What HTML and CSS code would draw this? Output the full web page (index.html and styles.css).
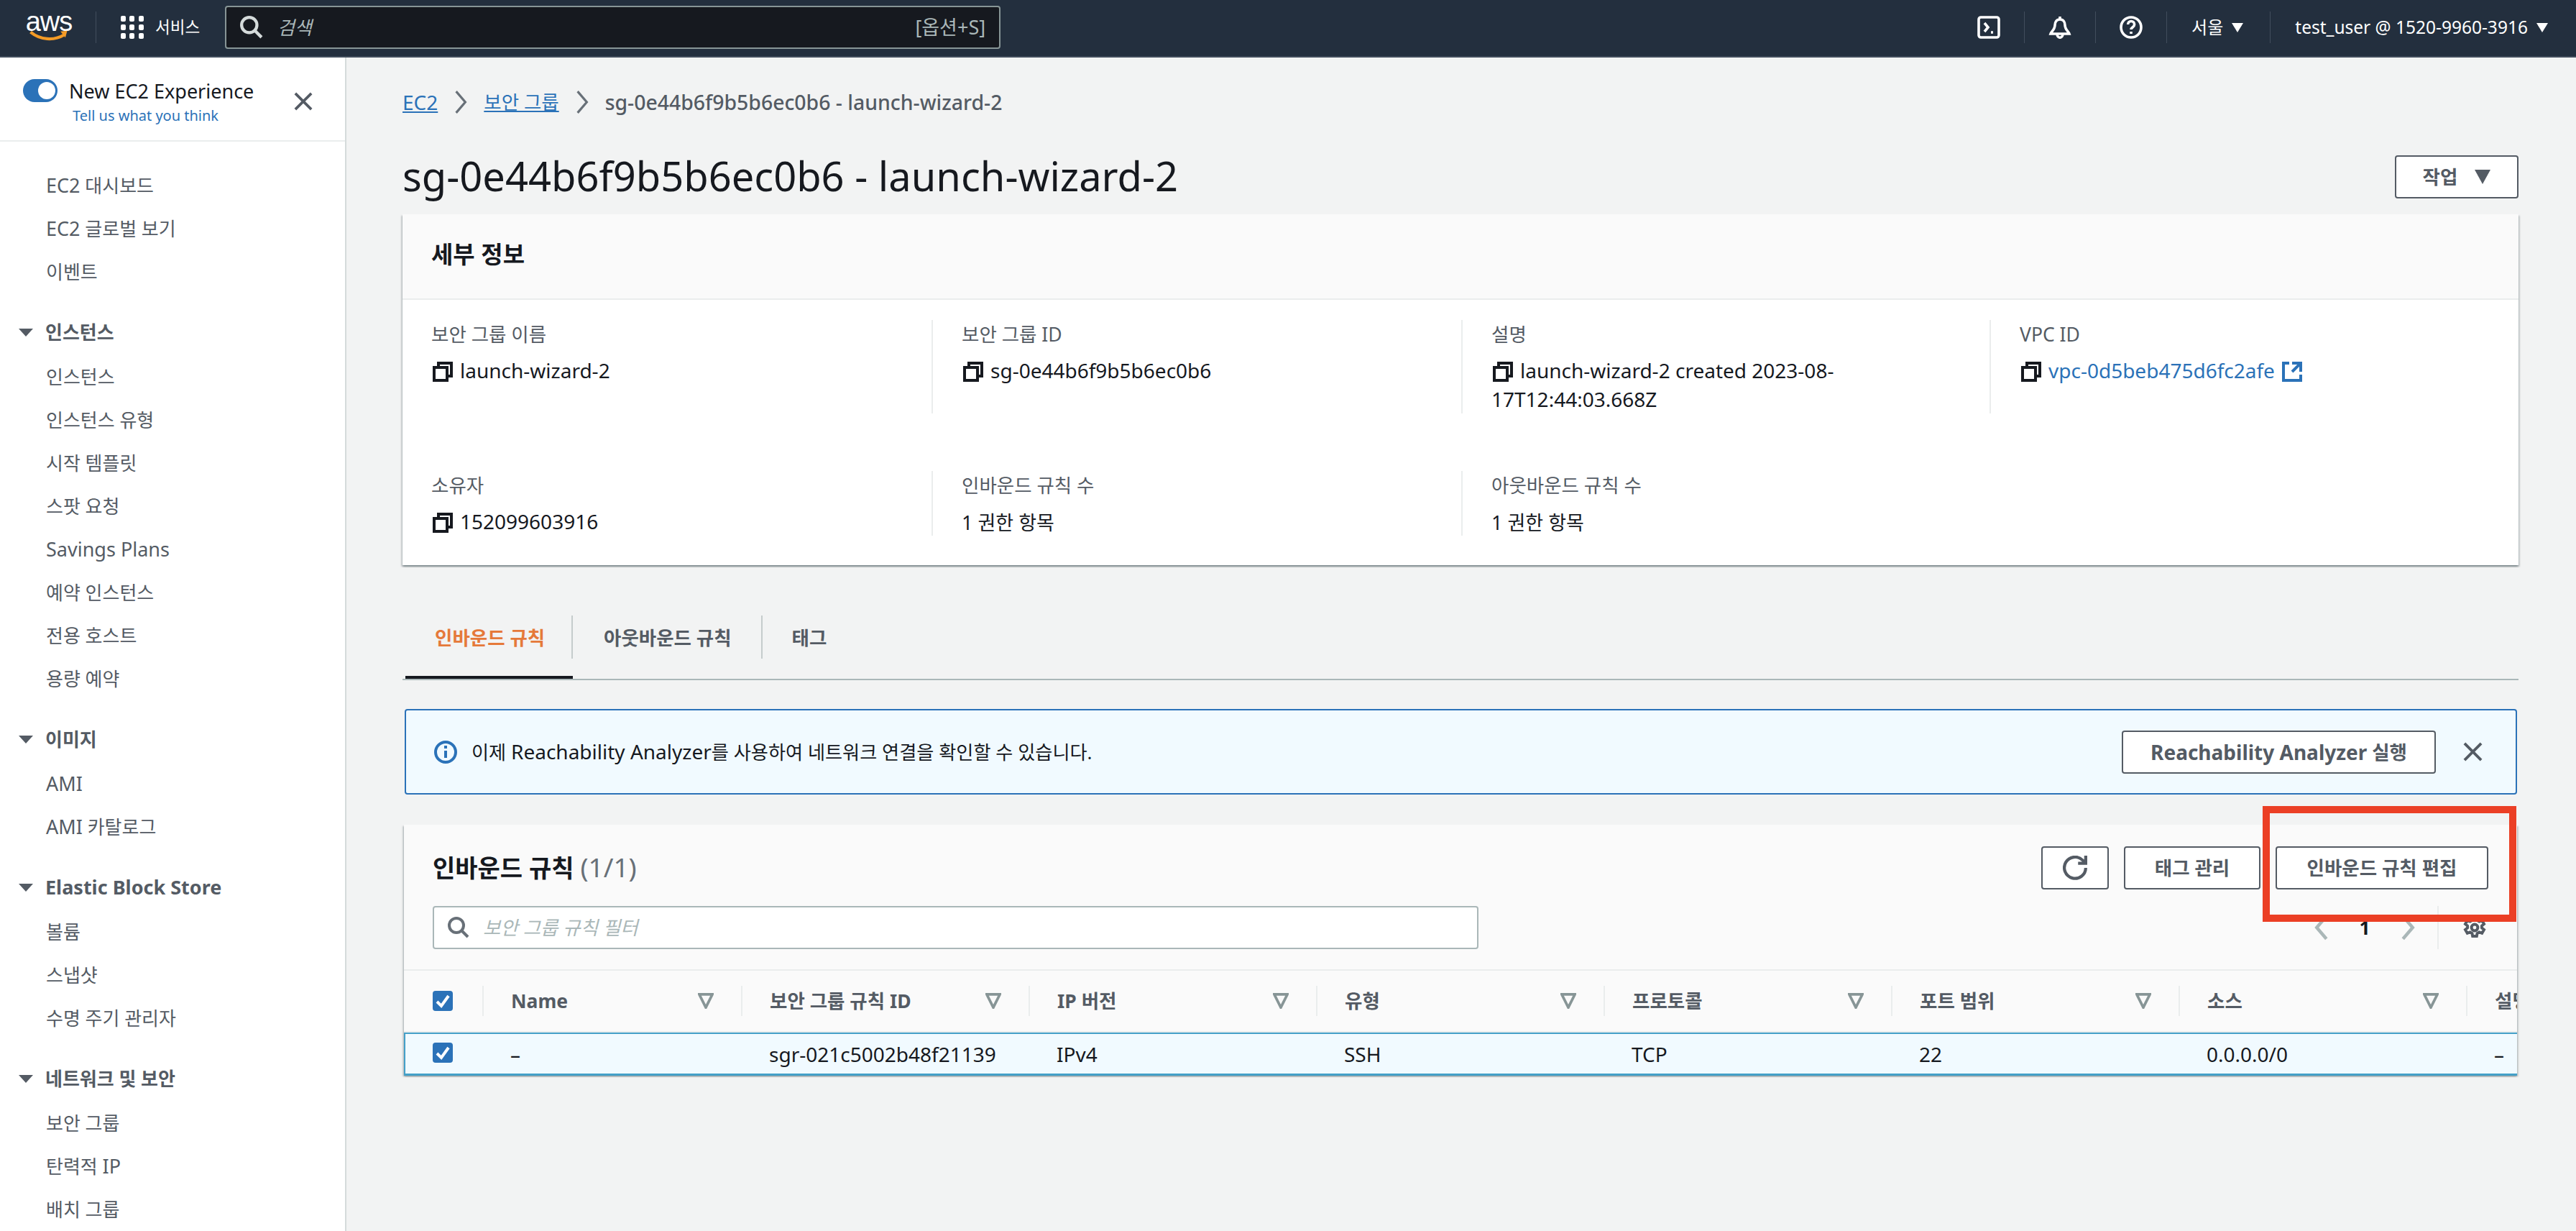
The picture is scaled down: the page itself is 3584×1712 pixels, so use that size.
FILE: index.html
```html
<!DOCTYPE html>
<html lang="ko">
<head>
    <meta charset="UTF-8">
    <meta name="viewport" content="width=device-width, initial-scale=1.0">
    <title>EC2 보안 그룹</title>
    <link rel="stylesheet" href="styles.css">
</head>
<body>
    <svg class="icon-defs" width="0" height="0">
        <symbol id="i-close" viewBox="1 1 14 14"><path d="M2 2l12 12M14 2L2 14"/></symbol>
        <symbol id="i-search" viewBox="1 1 15 15"><circle cx="7" cy="7" r="5"/><path d="M15 15l-4.500-4.500"/></symbol>
        <symbol id="i-copy" viewBox="1 1 14 14"><path d="M2 5h9v9H2z"/><path d="M5 5V2h9v9h-3"/></symbol>
        <symbol id="i-filter" viewBox="2 2 12 12"><path d="M3 3h10L8 13z"/></symbol>
        <symbol id="i-check" viewBox="0 0 14 14"><path d="M3 7.500l3 3 5-7"/></symbol>
    </svg>

    <header class="topbar">
        <a class="aws-logo"><span class="aws-word">aws</span>
            <svg class="aws-smile" viewBox="0 0 62 20"><path d="M1 3c16 13 38 15 56 4" fill="none" stroke="#f49b26" stroke-width="5"/><path d="M50 2l11-1-3 11z" fill="#f49b26"/></svg>
        </a>
        <span class="top-sep sep-logo"></span>
        <svg class="grid-icon" viewBox="0 0 32 32" fill="#fff">
            <rect x="0" y="0" width="7" height="8" rx="2"/><rect x="12" y="0" width="7" height="8" rx="2"/><rect x="25" y="0" width="7" height="8" rx="2"/>
            <rect x="0" y="12" width="7" height="8" rx="2"/><rect x="12" y="12" width="7" height="8" rx="2"/><rect x="25" y="12" width="7" height="8" rx="2"/>
            <rect x="0" y="24" width="7" height="8" rx="2"/><rect x="12" y="24" width="7" height="8" rx="2"/><rect x="25" y="24" width="7" height="8" rx="2"/>
        </svg>
        <span class="top-text services">서비스</span>
        <div class="top-search">
            <svg class="ic top-search-icon"><use href="#i-search"/></svg>
            <span class="top-search-hint">검색</span>
            <span class="top-search-key">[옵션+S]</span>
        </div>
        <svg class="ic top-ic top-first" viewBox="0 0 16 16"><rect x="1" y="1" width="14" height="14" rx="1.500"/><path d="M5 5l2.500 3L5 11M9.500 11.500h1.500"/></svg>
        <span class="top-sep"></span>
        <svg class="ic top-ic" viewBox="0 0 16 16"><path d="M8 2.500C5.500 2.500 4.500 4.500 4.500 6.500c0 3-2.500 4.500-3 6h13c-.5-1.500-3-3-3-6 0-2-1-4-3.500-4zM8 .5v2M6 12.500c0 3.500 4 3.500 4 0"/></svg>
        <span class="top-sep"></span>
        <svg class="ic top-ic" viewBox="0 0 16 16"><circle cx="8" cy="8" r="7"/><path d="M5.800 6c0-3 4.500-3 4.500 0 0 2-2.300 2-2.300 3.500M8 11v1.500"/></svg>
        <span class="top-sep"></span>
        <span class="top-text region">서울</span><span class="caret-white"></span>
        <span class="top-sep"></span>
        <span class="top-text account">test_user @ 1520-9960-3916</span><span class="caret-white"></span>
    </header>

    <div class="layout">
        <aside class="sidenav">
            <div class="side-top">
                <span class="toggle"><span class="toggle-knob"></span></span>
                <div class="side-top-text">
                    <div class="side-title">New EC2 Experience</div>
                    <a class="side-feedback">Tell us what you think</a>
                </div>
                <svg class="ic side-close"><use href="#i-close"/></svg>
            </div>
            <nav class="side-list">
                <a class="side-item"><span class="en">EC2</span> 대시보드</a>
                <a class="side-item"><span class="en">EC2</span> 글로벌 보기</a>
                <a class="side-item">이벤트</a>
                <div class="side-section"><span class="side-caret"></span>인스턴스</div>
                <a class="side-item">인스턴스</a>
                <a class="side-item">인스턴스 유형</a>
                <a class="side-item">시작 템플릿</a>
                <a class="side-item">스팟 요청</a>
                <a class="side-item"><span class="en">Savings Plans</span></a>
                <a class="side-item">예약 인스턴스</a>
                <a class="side-item">전용 호스트</a>
                <a class="side-item">용량 예약</a>
                <div class="side-section"><span class="side-caret"></span>이미지</div>
                <a class="side-item"><span class="en">AMI</span></a>
                <a class="side-item"><span class="en">AMI</span> 카탈로그</a>
                <div class="side-section"><span class="side-caret"></span><span class="en">Elastic Block Store</span></div>
                <a class="side-item">볼륨</a>
                <a class="side-item">스냅샷</a>
                <a class="side-item">수명 주기 관리자</a>
                <div class="side-section"><span class="side-caret"></span>네트워크 및 보안</div>
                <a class="side-item">보안 그룹</a>
                <a class="side-item">탄력적 <span class="en">IP</span></a>
                <a class="side-item">배치 그룹</a>
            </nav>
        </aside>

        <main class="content">
            <div class="crumbs">
                <a class="link en">EC2</a>
                <svg class="ic crumb-sep" viewBox="0 0 16 16"><path d="M5 1l6 7-6 7"/></svg>
                <a class="link">보안 그룹</a>
                <svg class="ic crumb-sep" viewBox="0 0 16 16"><path d="M5 1l6 7-6 7"/></svg>
                <span class="crumb-now">sg-0e44b6f9b5b6ec0b6 - launch-wizard-2</span>
            </div>

            <div class="page-head">
                <h1>sg-0e44b6f9b5b6ec0b6 - launch-wizard-2</h1>
                <button class="btn btn-actions">작업<span class="caret-dark"></span></button>
            </div>

            <section class="card">
                <div class="card-head">세부 정보</div>
                <div class="details">
                    <div class="cell">
                        <div class="cell-label">보안 그룹 이름</div>
                        <div class="cell-value"><svg class="ic copy"><use href="#i-copy"/></svg>launch-wizard-2</div>
                    </div>
                    <div class="cell">
                        <div class="cell-label">보안 그룹 ID</div>
                        <div class="cell-value"><svg class="ic copy"><use href="#i-copy"/></svg>sg-0e44b6f9b5b6ec0b6</div>
                    </div>
                    <div class="cell">
                        <div class="cell-label">설명</div>
                        <div class="cell-value"><svg class="ic copy"><use href="#i-copy"/></svg>launch-wizard-2 created 2023-08-<br>17T12:44:03.668Z</div>
                    </div>
                    <div class="cell">
                        <div class="cell-label">VPC ID</div>
                        <div class="cell-value"><svg class="ic copy"><use href="#i-copy"/></svg><a class="plain-link">vpc-0d5beb475d6fc2afe</a><svg class="ic ext" viewBox="1 1 14 14"><path d="M14 8V2H8M14 2L8 8M6 2H2v12h12v-4"/></svg></div>
                    </div>
                    <div class="cell">
                        <div class="cell-label">소유자</div>
                        <div class="cell-value"><svg class="ic copy"><use href="#i-copy"/></svg>152099603916</div>
                    </div>
                    <div class="cell">
                        <div class="cell-label">인바운드 규칙 수</div>
                        <div class="cell-count">1 권한 항목</div>
                    </div>
                    <div class="cell">
                        <div class="cell-label">아웃바운드 규칙 수</div>
                        <div class="cell-count">1 권한 항목</div>
                    </div>
                </div>
            </section>

            <div class="tabs">
                <div class="tab active"><span class="tab-label">인바운드 규칙</span></div>
                <div class="tab"><span class="tab-label">아웃바운드 규칙</span></div>
                <div class="tab"><span class="tab-label no-line">태그</span></div>
            </div>

            <div class="alert">
                <svg class="ic alert-icon" viewBox="0 0 16 16"><circle cx="8" cy="8" r="7"/><path d="M8 7v5M8 3.500v2"/></svg>
                <span class="alert-text">이제 <span class="en">Reachability Analyzer</span>를 사용하여 네트워크 연결을 확인할 수 있습니다.</span>
                <button class="btn btn-reach"><span class="en">Reachability Analyzer</span>&nbsp;실행</button>
                <svg class="ic alert-close"><use href="#i-close"/></svg>
            </div>

            <section class="card rules">
                <div class="rules-top">
                    <h2>인바운드 규칙 <span class="count">(1/1)</span></h2>
                    <div class="rules-actions">
                        <button class="btn btn-icon"><svg class="ic refresh" viewBox="0 0 16 16"><path d="M10 5h5V0M15 8a7 7 0 1 1-2-5l2 2"/></svg></button>
                        <button class="btn btn-tags">태그 관리</button>
                        <button class="btn btn-edit">인바운드 규칙 편집</button>
                    </div>
                </div>
                <div class="rules-filter">
                    <div class="filter-input">
                        <svg class="ic filter-search"><use href="#i-search"/></svg>
                        <span class="filter-hint">보안 그룹 규칙 필터</span>
                    </div>
                    <div class="pager">
                        <svg class="ic pager-arrow" viewBox="0 0 16 16"><path d="M11 1L5 8l6 7"/></svg>
                        <span class="pager-num">1</span>
                        <svg class="ic pager-arrow" viewBox="0 0 16 16"><path d="M5 1l6 7-6 7"/></svg>
                        <span class="pager-sep"></span>
                        <svg class="ic pager-gear" viewBox="0 0 16 16"><circle cx="8" cy="8" r="2.200"/><path d="M6.600 1h2.800l.4 2 1.400.8 1.900-.7 1.400 2.400-1.500 1.300v1.400l1.500 1.300-1.400 2.400-1.900-.7-1.400.8-.4 2H6.600l-.4-2-1.400-.8-1.900.7-1.400-2.400 1.500-1.300V6.800L1.500 5.500l1.400-2.400 1.900.7 1.400-.8z"/></svg>
                    </div>
                </div>
                <div class="table-wrap">
                    <div class="tr thead">
                        <div class="td-check"><span class="checkbox"><svg class="check-mark"><use href="#i-check"/></svg></span></div>
                        <div class="th"><span>Name</span><svg class="ic th-filter"><use href="#i-filter"/></svg></div>
                        <div class="th"><span>보안 그룹 규칙 ID</span><svg class="ic th-filter"><use href="#i-filter"/></svg></div>
                        <div class="th"><span>IP 버전</span><svg class="ic th-filter"><use href="#i-filter"/></svg></div>
                        <div class="th"><span>유형</span><svg class="ic th-filter"><use href="#i-filter"/></svg></div>
                        <div class="th"><span>프로토콜</span><svg class="ic th-filter"><use href="#i-filter"/></svg></div>
                        <div class="th"><span>포트 범위</span><svg class="ic th-filter"><use href="#i-filter"/></svg></div>
                        <div class="th"><span>소스</span><svg class="ic th-filter"><use href="#i-filter"/></svg></div>
                        <div class="th"><span>설명</span></div>
                    </div>
                    <div class="tr selected">
                        <div class="td-check"><span class="checkbox"><svg class="check-mark"><use href="#i-check"/></svg></span></div>
                        <div class="td">–</div>
                        <div class="td">sgr-021c5002b48f21139</div>
                        <div class="td">IPv4</div>
                        <div class="td">SSH</div>
                        <div class="td">TCP</div>
                        <div class="td">22</div>
                        <div class="td">0.0.0.0/0</div>
                        <div class="td">–</div>
                    </div>
                </div>
                <div class="callout"></div>
            </section>
        </main>
    </div>
</body>
</html>
```

FILE: styles.css
```css
* {
    box-sizing: border-box;
}
html, body {
    margin: 0;
    height: 1712px;
    overflow: hidden;
}
body {
    font-family: "Noto Sans", "Noto Sans CJK KR", sans-serif;
    font-size: 26.5px;
    line-height: 40px;
    color: #16191f;
    background-color: #f2f3f3;
}
.en {
    font-size: 28px;
}
.icon-defs {
    position: absolute;
}
.ic {
    fill: none;
    stroke: currentColor;
    stroke-width: 2;
    flex: none;
}

/* top bar */
.topbar {
    height: 80px;
    display: flex;
    align-items: center;
    background-color: #232f3e;
    border-bottom: 2px solid #414d5c;
    color: #fff;
    padding-bottom: 2px;
}
.aws-logo {
    width: 64px;
    margin-left: 36px;
    display: flex;
    flex-direction: column;
    align-items: center;
    height: 42px;
}
.aws-word {
    font-family: "Liberation Sans", sans-serif;
    font-size: 38px;
    line-height: 26px;
    letter-spacing: -1px;
}
.aws-smile {
    width: 62px;
    height: 18px;
    margin-top: -1px;
}
.top-sep {
    width: 1px;
    height: 44px;
    background-color: #414d5c;
}
.sep-logo {
    margin-left: 33px;
}
.grid-icon {
    width: 32px;
    height: 32px;
    margin-left: 34px;
}
.top-text {
    font-size: 24.5px;
    line-height: 32px;
}
.services {
    margin-left: 16px;
    font-size: 22.5px;
}
.top-search {
    width: 1079px;
    height: 60px;
    margin-left: 35px;
    display: flex;
    align-items: center;
    background-color: #16191f;
    border: 2px solid #879596;
    border-radius: 4px;
    color: #aab7b8;
    padding: 0 19px;
    font-size: 26px;
}
.top-search-icon {
    width: 32px;
    height: 32px;
    color: #d5dbdb;
}
.top-search-hint {
    margin-left: 20px;
    font-style: italic;
}
.top-search-key {
    margin-left: auto;
    font-size: 27px;
}
.top-ic {
    width: 32px;
    height: 32px;
    margin: 0 33px;
    stroke-width: 1.800;
}
.top-first {
    margin-left: 1359px;
}
.region {
    margin-left: 34px;
    font-size: 24px;
}
.caret-white {
    width: 0;
    height: 0;
    border-left: 8px solid transparent;
    border-right: 8px solid transparent;
    border-top: 13px solid #fff;
    margin-left: 12px;
    margin-right: 37px;
}
.account {
    margin-left: 34px;
}
.account + .caret-white {
    margin-right: 0;
}

/* layout */
.layout {
    display: flex;
    height: 1632px;
}
.sidenav {
    width: 482px;
    flex: none;
    background-color: #fff;
    border-right: 2px solid #d5dbdb;
    overflow: hidden;
    font-size: 26px;
}
.sidenav .en {
    font-size: 27px;
}
.side-top {
    height: 117px;
    display: flex;
    align-items: flex-start;
    border-bottom: 2px solid #eaeded;
    padding: 30px 0 0 32px;
}
.toggle {
    width: 48px;
    height: 32px;
    border-radius: 16px;
    background-color: #2b72b8;
    position: relative;
    flex: none;
}
.toggle-knob {
    position: absolute;
    right: 3px;
    top: 4px;
    width: 24px;
    height: 24px;
    border-radius: 50%;
    background-color: #fff;
}
.side-top-text {
    margin-left: 16px;
    width: 313px;
}
.side-title {
    font-size: 27px;
    line-height: 34px;
}
.side-feedback {
    display: block;
    margin-left: 5px;
    font-size: 20px;
    line-height: 34px;
    color: #2b72b8;
}
.side-close {
    width: 26px;
    height: 26px;
    color: #545b64;
    margin-top: 18px;
}
.side-list {
    padding-top: 31px;
    color: #545b64;
}
.side-item {
    display: block;
    height: 60px;
    line-height: 60px;
    padding-left: 64px;
}
.side-section {
    height: 60px;
    line-height: 60px;
    margin-top: 24px;
    margin-bottom: 2px;
    padding-left: 26px;
    font-weight: 700;
    display: flex;
    align-items: center;
}
.side-caret {
    width: 0;
    height: 0;
    border-left: 10px solid transparent;
    border-right: 10px solid transparent;
    border-top: 11px solid #545b64;
    margin-right: 17px;
}

/* main column */
.content {
    flex: 1;
    padding: 44px 80px 0 78px;
    min-width: 0;
}
.crumbs {
    display: flex;
    align-items: center;
    height: 36px;
    color: #545b64;
}
.link {
    color: #2b72b8;
    text-decoration: underline;
}
.crumb-sep {
    width: 34px;
    height: 34px;
    margin: 0 15px;
    color: #687078;
    stroke-width: 1.500;
}
.crumb-now {
    font-weight: 500;
    font-size: 28.4px;
}
.page-head {
    display: flex;
    align-items: center;
    justify-content: space-between;
    height: 60px;
    margin-top: 56px;
}
h1 {
    margin: -4px 0 0;
    font-size: 56px;
    line-height: 72px;
    font-weight: 400;
}
.btn {
    font: inherit;
    font-weight: 700;
    color: #545b64;
    background-color: #fff;
    border: 2px solid #545b64;
    border-radius: 4px;
    height: 60px;
    padding: 0;
    display: inline-flex;
    align-items: center;
    justify-content: center;
    flex: none;
}
.btn-actions {
    width: 172px;
}
.caret-dark {
    width: 0;
    height: 0;
    border-left: 11px solid transparent;
    border-right: 11px solid transparent;
    border-top: 20px solid #545b64;
    margin-left: 24px;
}
.card {
    background-color: #fff;
    box-shadow: 0 2px 2px 0 rgba(0, 28, 36, .3), 2px 2px 2px 0 rgba(0, 28, 36, .15), -2px 2px 2px 0 rgba(0, 28, 36, .15);
    margin-top: 22px;
    height: 488px;
}
.card-head {
    height: 119px;
    background-color: #fafafa;
    border-bottom: 2px solid #eaeded;
    padding: 36px 40px 0;
    font-size: 33px;
    font-weight: 700;
}
.details {
    display: grid;
    grid-template-columns: 736px 737px 735px 736px;
    grid-template-rows: 130px 90px;
    row-gap: 80px;
    padding-top: 28px;
}
.cell {
    padding-left: 40px;
    border-left: 2px solid #eaeded;
}
.cell:first-child, .cell:nth-child(5) {
    border-left: none;
}
.cell-label {
    color: #545b64;
    margin-bottom: 12px;
}
.cell-value {
    font-size: 28px;
    margin-top: -2px;
}
.cell-count {
    font-size: 27px;
}
.copy {
    width: 28px;
    height: 28px;
    margin: 0 10px 0 2px;
    vertical-align: -5px;
}
.plain-link {
    color: #2b72b8;
}
.ext {
    width: 28px;
    height: 28px;
    margin-left: 10px;
    vertical-align: -5px;
    color: #2b72b8;
}

/* tabs */
.tabs {
    display: flex;
    margin-top: 70px;
    padding-left: 4px;
    border-bottom: 2px solid #aab7b8;
}
.tab {
    padding-bottom: 24px;
    border-bottom: 4px solid transparent;
    margin-right: 2px;
}
.tab.active {
    border-bottom-color: #16191f;
    width: 233px;
}
.tab-label {
    display: block;
    height: 60px;
    line-height: 62px;
    padding: 0 41px;
    border-right: 2px solid #c5cccc;
    font-weight: 700;
    color: #545b64;
}
.tab.active .tab-label {
    color: #e5793a;
    padding-right: 0;
}
.no-line {
    border-right: none;
    padding-left: 39px;
}

/* alert */
.alert {
    height: 119px;
    margin: 40px 2px 0 3px;
    border: 2px solid #2b72b8;
    border-radius: 4px;
    background-color: #f1faff;
    display: flex;
    align-items: center;
    padding: 0 46px 0 39px;
}
.alert-icon {
    width: 32px;
    height: 32px;
    color: #2b72b8;
}
.alert-text {
    margin-left: 20px;
    font-size: 26.2px;
}
.btn-reach {
    margin-left: auto;
    width: 437px;
}
.alert-close {
    width: 27px;
    height: 27px;
    margin-left: 38px;
    color: #545b64;
}

/* rules table */
.rules {
    position: relative;
    margin: 42px 2px 0 2px;
    height: 348px;
    background-color: #fafafa;
}
.rules-top {
    display: flex;
    align-items: center;
    justify-content: space-between;
    padding: 29px 40px 0;
}
h2 {
    margin: 0;
    font-size: 34px;
    line-height: 60px;
    font-weight: 700;
}
.count {
    font-weight: 400;
    font-size: 37px;
    color: #687078;
}
.rules-actions {
    display: flex;
    gap: 21px;
}
.btn-icon {
    width: 94px;
}
.refresh {
    width: 34px;
    height: 34px;
}
.btn-tags {
    width: 190px;
}
.btn-edit {
    width: 296px;
}
.rules-filter {
    display: flex;
    align-items: center;
    justify-content: space-between;
    padding: 23px 43px 0 40px;
}
.filter-input {
    width: 1455px;
    height: 60px;
    display: flex;
    align-items: center;
    background-color: #fff;
    border: 2px solid #aab7b8;
    border-radius: 4px;
    padding-left: 19px;
}
.filter-search {
    width: 30px;
    height: 30px;
    color: #687078;
}
.filter-hint {
    margin-left: 19px;
    font-style: italic;
    color: #aab7b8;
}
.pager {
    display: flex;
    align-items: center;
    height: 60px;
}
.pager-arrow {
    width: 36px;
    height: 36px;
    color: #aab7b8;
}
.pager-num {
    font-weight: 700;
    width: 84px;
    text-align: center;
}
.pager-sep {
    width: 2px;
    height: 60px;
    background-color: #eaeded;
    margin: 0 34px 0 23px;
}
.pager-gear {
    width: 32px;
    height: 32px;
    color: #545b64;
}
.table-wrap {
    margin-top: 28px;
    overflow: hidden;
    height: 150px;
}
.tr {
    display: grid;
    grid-template-columns: 109px 360px repeat(6, 400px) 400px;
}
.thead {
    height: 88px;
    border-top: 2px solid #eaeded;
    border-bottom: 2px solid #eaeded;
    align-items: center;
}
.th {
    height: 42px;
    border-left: 2px solid #eaeded;
    padding: 0 38px 0 38px;
    display: flex;
    align-items: center;
    justify-content: space-between;
    font-weight: 700;
    color: #545b64;
}
.th-filter {
    width: 22px;
    height: 22px;
    color: #879596;
}
.td-check {
    padding-left: 40px;
    display: flex;
    align-items: center;
}
.checkbox {
    width: 28px;
    height: 28px;
    border-radius: 4px;
    background-color: #2b72b8;
    display: flex;
}
.check-mark {
    width: 28px;
    height: 28px;
    fill: none;
    stroke: #fff;
    stroke-width: 2;
}
.selected {
    height: 60px;
    background-color: #f1faff;
    border: 2px solid #44a0c8;
    border-bottom-width: 3px;
    width: 3200px;
    align-items: center;
    font-size: 28px;
    grid-template-columns: 107px 360px repeat(6, 400px) 400px;
}
.selected .td-check {
    padding-left: 38px;
    margin-top: -4px;
}
.td {
    padding-left: 39px;
    white-space: nowrap;
}
.callout {
    position: absolute;
    left: 2586px;
    top: -26px;
    width: 353px;
    height: 161px;
    border: 10px solid #eb3f25;
}
```
